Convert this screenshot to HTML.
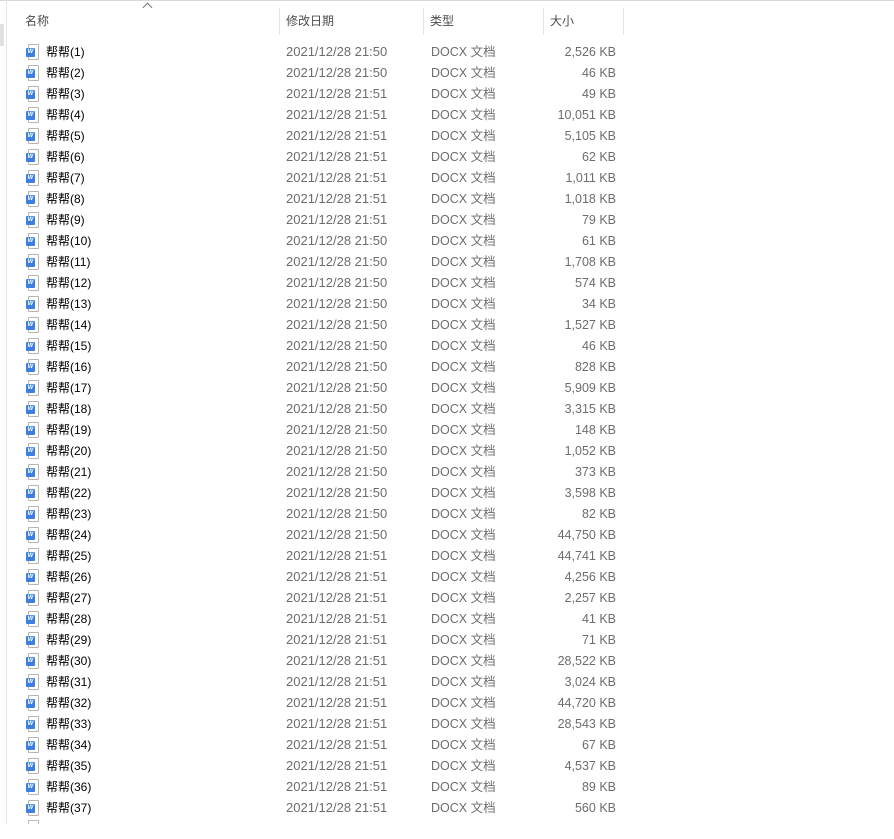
<!DOCTYPE html>
<html><head><meta charset="utf-8"><style>
body{margin:0;width:894px;height:839px;background:#fff;position:relative;overflow:hidden;font-family:"Liberation Sans","Noto Sans CJK SC",sans-serif;font-size:12px;}
.top{position:absolute;left:0;top:0;width:894px;height:1px;background:#d9d9d9}
.vl{position:absolute;left:6px;top:0;width:1px;height:824px;background:#e6e6e6}
.sb{position:absolute;left:0;top:24px;width:4px;height:22px;background:#e0e0e0}
.h{position:absolute;top:13px;line-height:16px;color:#4c4c4c;font-size:12px}
.sep{position:absolute;top:8px;width:1px;height:27px;background:#e5e5e5}
.caret{position:absolute;left:144px;top:4px;width:6px;height:6px;border-left:1px solid #777;border-top:1px solid #777;transform:rotate(45deg)}
.r{position:absolute;left:0;height:21px;width:640px}
.r span{position:absolute;top:4px;line-height:15px;height:15px;white-space:nowrap}
.n{left:46px;color:#000}
.r .d{left:286px;color:#6d6d6d;font-size:13px;top:3px}
.t{left:431px;color:#6d6d6d;font-size:12.5px}
.s{right:24px;color:#6d6d6d;text-align:right;font-size:12.5px}
.ic{position:absolute;left:28px;top:3px;width:9px;height:14px;border:1px solid #b5b5b5;border-radius:1px;background:#fff}
.ic b{position:absolute;left:-3px;top:3px;width:9px;height:9px;background:#3d7fe0;color:#fff;font-size:6px;line-height:9px;text-align:center;font-weight:bold;border-radius:1px}
</style></head><body>
<div class="top"></div><div class="vl"></div><div class="sb"></div>
<div class="caret"></div>
<div class="h" style="left:25px">名称</div>
<div class="sep" style="left:279px"></div>
<div class="h" style="left:286px">修改日期</div>
<div class="sep" style="left:423px"></div>
<div class="h" style="left:430px">类型</div>
<div class="sep" style="left:543px"></div>
<div class="h" style="left:550px">大小</div>
<div class="sep" style="left:623px"></div>

<div class="r" style="top:41px"><i class="ic"><b>W</b></i><span class="n">帮帮(1)</span><span class="d">2021/12/28 21:50</span><span class="t">DOCX 文档</span><span class="s">2,526 KB</span></div>
<div class="r" style="top:62px"><i class="ic"><b>W</b></i><span class="n">帮帮(2)</span><span class="d">2021/12/28 21:50</span><span class="t">DOCX 文档</span><span class="s">46 KB</span></div>
<div class="r" style="top:83px"><i class="ic"><b>W</b></i><span class="n">帮帮(3)</span><span class="d">2021/12/28 21:51</span><span class="t">DOCX 文档</span><span class="s">49 KB</span></div>
<div class="r" style="top:104px"><i class="ic"><b>W</b></i><span class="n">帮帮(4)</span><span class="d">2021/12/28 21:51</span><span class="t">DOCX 文档</span><span class="s">10,051 KB</span></div>
<div class="r" style="top:125px"><i class="ic"><b>W</b></i><span class="n">帮帮(5)</span><span class="d">2021/12/28 21:51</span><span class="t">DOCX 文档</span><span class="s">5,105 KB</span></div>
<div class="r" style="top:146px"><i class="ic"><b>W</b></i><span class="n">帮帮(6)</span><span class="d">2021/12/28 21:51</span><span class="t">DOCX 文档</span><span class="s">62 KB</span></div>
<div class="r" style="top:167px"><i class="ic"><b>W</b></i><span class="n">帮帮(7)</span><span class="d">2021/12/28 21:51</span><span class="t">DOCX 文档</span><span class="s">1,011 KB</span></div>
<div class="r" style="top:188px"><i class="ic"><b>W</b></i><span class="n">帮帮(8)</span><span class="d">2021/12/28 21:51</span><span class="t">DOCX 文档</span><span class="s">1,018 KB</span></div>
<div class="r" style="top:209px"><i class="ic"><b>W</b></i><span class="n">帮帮(9)</span><span class="d">2021/12/28 21:51</span><span class="t">DOCX 文档</span><span class="s">79 KB</span></div>
<div class="r" style="top:230px"><i class="ic"><b>W</b></i><span class="n">帮帮(10)</span><span class="d">2021/12/28 21:50</span><span class="t">DOCX 文档</span><span class="s">61 KB</span></div>
<div class="r" style="top:251px"><i class="ic"><b>W</b></i><span class="n">帮帮(11)</span><span class="d">2021/12/28 21:50</span><span class="t">DOCX 文档</span><span class="s">1,708 KB</span></div>
<div class="r" style="top:272px"><i class="ic"><b>W</b></i><span class="n">帮帮(12)</span><span class="d">2021/12/28 21:50</span><span class="t">DOCX 文档</span><span class="s">574 KB</span></div>
<div class="r" style="top:293px"><i class="ic"><b>W</b></i><span class="n">帮帮(13)</span><span class="d">2021/12/28 21:50</span><span class="t">DOCX 文档</span><span class="s">34 KB</span></div>
<div class="r" style="top:314px"><i class="ic"><b>W</b></i><span class="n">帮帮(14)</span><span class="d">2021/12/28 21:50</span><span class="t">DOCX 文档</span><span class="s">1,527 KB</span></div>
<div class="r" style="top:335px"><i class="ic"><b>W</b></i><span class="n">帮帮(15)</span><span class="d">2021/12/28 21:50</span><span class="t">DOCX 文档</span><span class="s">46 KB</span></div>
<div class="r" style="top:356px"><i class="ic"><b>W</b></i><span class="n">帮帮(16)</span><span class="d">2021/12/28 21:50</span><span class="t">DOCX 文档</span><span class="s">828 KB</span></div>
<div class="r" style="top:377px"><i class="ic"><b>W</b></i><span class="n">帮帮(17)</span><span class="d">2021/12/28 21:50</span><span class="t">DOCX 文档</span><span class="s">5,909 KB</span></div>
<div class="r" style="top:398px"><i class="ic"><b>W</b></i><span class="n">帮帮(18)</span><span class="d">2021/12/28 21:50</span><span class="t">DOCX 文档</span><span class="s">3,315 KB</span></div>
<div class="r" style="top:419px"><i class="ic"><b>W</b></i><span class="n">帮帮(19)</span><span class="d">2021/12/28 21:50</span><span class="t">DOCX 文档</span><span class="s">148 KB</span></div>
<div class="r" style="top:440px"><i class="ic"><b>W</b></i><span class="n">帮帮(20)</span><span class="d">2021/12/28 21:50</span><span class="t">DOCX 文档</span><span class="s">1,052 KB</span></div>
<div class="r" style="top:461px"><i class="ic"><b>W</b></i><span class="n">帮帮(21)</span><span class="d">2021/12/28 21:50</span><span class="t">DOCX 文档</span><span class="s">373 KB</span></div>
<div class="r" style="top:482px"><i class="ic"><b>W</b></i><span class="n">帮帮(22)</span><span class="d">2021/12/28 21:50</span><span class="t">DOCX 文档</span><span class="s">3,598 KB</span></div>
<div class="r" style="top:503px"><i class="ic"><b>W</b></i><span class="n">帮帮(23)</span><span class="d">2021/12/28 21:50</span><span class="t">DOCX 文档</span><span class="s">82 KB</span></div>
<div class="r" style="top:524px"><i class="ic"><b>W</b></i><span class="n">帮帮(24)</span><span class="d">2021/12/28 21:50</span><span class="t">DOCX 文档</span><span class="s">44,750 KB</span></div>
<div class="r" style="top:545px"><i class="ic"><b>W</b></i><span class="n">帮帮(25)</span><span class="d">2021/12/28 21:51</span><span class="t">DOCX 文档</span><span class="s">44,741 KB</span></div>
<div class="r" style="top:566px"><i class="ic"><b>W</b></i><span class="n">帮帮(26)</span><span class="d">2021/12/28 21:51</span><span class="t">DOCX 文档</span><span class="s">4,256 KB</span></div>
<div class="r" style="top:587px"><i class="ic"><b>W</b></i><span class="n">帮帮(27)</span><span class="d">2021/12/28 21:51</span><span class="t">DOCX 文档</span><span class="s">2,257 KB</span></div>
<div class="r" style="top:608px"><i class="ic"><b>W</b></i><span class="n">帮帮(28)</span><span class="d">2021/12/28 21:51</span><span class="t">DOCX 文档</span><span class="s">41 KB</span></div>
<div class="r" style="top:629px"><i class="ic"><b>W</b></i><span class="n">帮帮(29)</span><span class="d">2021/12/28 21:51</span><span class="t">DOCX 文档</span><span class="s">71 KB</span></div>
<div class="r" style="top:650px"><i class="ic"><b>W</b></i><span class="n">帮帮(30)</span><span class="d">2021/12/28 21:51</span><span class="t">DOCX 文档</span><span class="s">28,522 KB</span></div>
<div class="r" style="top:671px"><i class="ic"><b>W</b></i><span class="n">帮帮(31)</span><span class="d">2021/12/28 21:51</span><span class="t">DOCX 文档</span><span class="s">3,024 KB</span></div>
<div class="r" style="top:692px"><i class="ic"><b>W</b></i><span class="n">帮帮(32)</span><span class="d">2021/12/28 21:51</span><span class="t">DOCX 文档</span><span class="s">44,720 KB</span></div>
<div class="r" style="top:713px"><i class="ic"><b>W</b></i><span class="n">帮帮(33)</span><span class="d">2021/12/28 21:51</span><span class="t">DOCX 文档</span><span class="s">28,543 KB</span></div>
<div class="r" style="top:734px"><i class="ic"><b>W</b></i><span class="n">帮帮(34)</span><span class="d">2021/12/28 21:51</span><span class="t">DOCX 文档</span><span class="s">67 KB</span></div>
<div class="r" style="top:755px"><i class="ic"><b>W</b></i><span class="n">帮帮(35)</span><span class="d">2021/12/28 21:51</span><span class="t">DOCX 文档</span><span class="s">4,537 KB</span></div>
<div class="r" style="top:776px"><i class="ic"><b>W</b></i><span class="n">帮帮(36)</span><span class="d">2021/12/28 21:51</span><span class="t">DOCX 文档</span><span class="s">89 KB</span></div>
<div class="r" style="top:797px"><i class="ic"><b>W</b></i><span class="n">帮帮(37)</span><span class="d">2021/12/28 21:51</span><span class="t">DOCX 文档</span><span class="s">560 KB</span></div>
<div style="position:absolute;left:28px;top:820px;width:9px;height:4px;border:1px solid #bbb;border-bottom:none"></div>
<div style="position:absolute;left:0;top:824px;width:894px;height:15px;background:#fff"></div>
</body></html>
